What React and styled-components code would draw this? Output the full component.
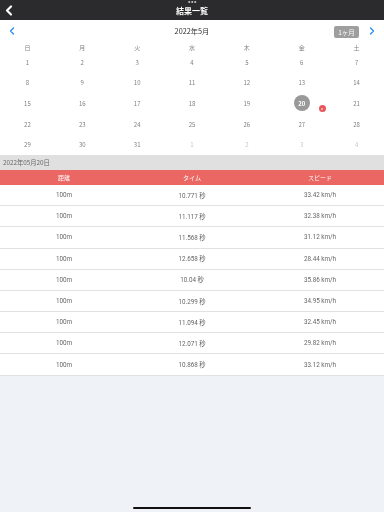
import React from "react";
import styled, { createGlobalStyle } from "styled-components";

const Global = createGlobalStyle`
  html, body { margin: 0; padding: 0; }
  body {
    background: #eff2f7;
    font-family: "Noto Sans CJK JP", "Noto Sans", sans-serif;
    width: 384px;
    height: 512px;
    overflow: hidden;
  }
`;

const Page = styled.div`
  position: relative;
  width: 384px;
  height: 512px;
  display: flex;
  flex-direction: column;
  will-change: transform;
`;

const TopBar = styled.header`
  position: relative;
  height: 20px;
  background: #2b2b2d;
  display: flex;
  align-items: center;
  justify-content: center;
`;

const BackBtn = styled.div`
  position: absolute;
  left: 3px;
  top: 3px;
  width: 12px;
  height: 14px;
  display: flex;
  align-items: center;
  justify-content: center;
`;

const Title = styled.div`
  color: #fff;
  font-size: 8px;
  font-weight: 700;
  line-height: 10px;
  margin-top: 1px;
`;

const Dots = styled.div`
  position: absolute;
  top: 1px;
  left: 50%;
  transform: translateX(-50%);
  display: flex;
  gap: 1.5px;
  span {
    width: 1.5px;
    height: 1.5px;
    border-radius: 50%;
    background: #bbb;
  }
`;

const Calendar = styled.section`
  background: #fff;
  display: flex;
  flex-direction: column;
`;

const MonthRow = styled.div`
  height: 22px;
  display: flex;
  align-items: center;
  justify-content: center;
  position: relative;
`;

const NavArrow = styled.div`
  position: absolute;
  top: 7px;
  ${(p) => (p.$side === "left" ? "left: 9px;" : "right: 9px;")}
  width: 6px;
  height: 8px;
  display: flex;
`;

const MonthLabel = styled.div`
  font-size: 7.3px;
  color: #333;
  line-height: 10px;
`;

const RangeBtn = styled.div`
  position: absolute;
  right: 25px;
  top: 6px;
  width: 25px;
  height: 12px;
  border-radius: 2px;
  background: #9e9e9e;
  color: #fff;
  font-size: 6.5px;
  display: flex;
  align-items: center;
  justify-content: center;
`;

const Grid = styled.div`
  display: grid;
  grid-template-columns: repeat(7, 1fr);
  grid-auto-rows: ${(p) => p.$rowH}px;
`;

const Cell = styled.div`
  position: relative;
  display: flex;
  align-items: center;
  justify-content: center;
  font-size: 6px;
  color: ${(p) => (p.$muted ? "#c8c8c8" : "#808080")};
`;

const Selected = styled.div`
  width: 16px;
  height: 16px;
  border-radius: 50%;
  background: #999;
  color: #fff;
  font-size: 6px;
  font-weight: 700;
  display: flex;
  align-items: center;
  justify-content: center;
`;

const Badge = styled.div`
  position: absolute;
  left: 44.5px;
  top: 12px;
  width: 7px;
  height: 7px;
  border-radius: 50%;
  background: #e9565a;
  display: flex;
  align-items: center;
  justify-content: center;
  &::after {
    content: "";
    width: 2px;
    height: 2px;
    border-radius: 50%;
    background: #f7c3c3;
  }
`;

const DateBand = styled.div`
  height: 15px;
  background: #e0e0e0;
  display: flex;
  align-items: center;
  padding-left: 3px;
  font-size: 6.3px;
  color: #666;
`;

const TableHead = styled.div`
  height: 15px;
  background: #eb6763;
  display: grid;
  grid-template-columns: repeat(3, 1fr);
  align-items: center;
  justify-items: center;
  color: #fff;
  font-size: 6px;
`;

const Row = styled.div`
  height: 20.2px;
  background: #fff;
  border-bottom: 1px solid #e2e2e2;
  display: grid;
  grid-template-columns: repeat(3, 1fr);
  align-items: center;
  justify-items: center;
  color: #666;
  font-size: 6.3px;
  font-family: "Roboto", "Noto Sans CJK JP", sans-serif;
`;

const HomeBar = styled.div`
  position: absolute;
  left: 133px;
  bottom: 3px;
  width: 118px;
  height: 2px;
  border-radius: 1px;
  background: #111;
`;

const weekdays = ["日", "月", "火", "水", "木", "金", "土"];
const days = [];
for (let i = 1; i <= 31; i++) days.push({ d: i });
for (let i = 1; i <= 4; i++) days.push({ d: i, muted: true });

const results = [
  ["100m", "10.771 秒", "33.42 km/h"],
  ["100m", "11.117 秒", "32.38 km/h"],
  ["100m", "11.568 秒", "31.12 km/h"],
  ["100m", "12.658 秒", "28.44 km/h"],
  ["100m", "10.04 秒", "35.86 km/h"],
  ["100m", "10.299 秒", "34.95 km/h"],
  ["100m", "11.094 秒", "32.45 km/h"],
  ["100m", "12.071 秒", "29.82 km/h"],
  ["100m", "10.868 秒", "33.12 km/h"],
];

const Chevron = ({ dir, color, w = 6, h = 8, sw = 1.4 }) => (
  <svg width={w} height={h} viewBox="0 0 6 8">
    <path
      d={dir === "left" ? "M4.5 1 L1.5 4 L4.5 7" : "M1.5 1 L4.5 4 L1.5 7"}
      fill="none"
      stroke={color}
      strokeWidth={sw}
      strokeLinecap="round"
      strokeLinejoin="round"
    />
  </svg>
);

export default function App() {
  return (
    <Page>
      <Global />
      <TopBar>
        <Dots>
          <span />
          <span />
          <span />
        </Dots>
        <BackBtn>
          <Chevron dir="left" color="#fff" w={8} h={11} sw={1.6} />
        </BackBtn>
        <Title>結果一覧</Title>
      </TopBar>
      <Calendar>
        <MonthRow>
          <NavArrow $side="left">
            <Chevron dir="left" color="#2f8ef5" />
          </NavArrow>
          <MonthLabel>2022年5月</MonthLabel>
          <RangeBtn>1ヶ月</RangeBtn>
          <NavArrow $side="right">
            <Chevron dir="right" color="#2f8ef5" />
          </NavArrow>
        </MonthRow>
        <Grid $rowH={10}>
          {weekdays.map((w) => (
            <Cell key={w}>{w}</Cell>
          ))}
        </Grid>
        <Grid $rowH={20.6}>
          {days.map((x, i) => (
            <Cell key={i} $muted={x.muted}>
              {!x.muted && x.d === 20 ? (
                <>
                  <Selected>20</Selected>
                  <Badge />
                </>
              ) : (
                x.d
              )}
            </Cell>
          ))}
        </Grid>
      </Calendar>
      <DateBand>2022年05月20日</DateBand>
      <TableHead>
        <span>距離</span>
        <span>タイム</span>
        <span>スピード</span>
      </TableHead>
      {results.map((r, i) => (
        <Row key={i}>
          <span>{r[0]}</span>
          <span>{r[1]}</span>
          <span>{r[2]}</span>
        </Row>
      ))}
      <HomeBar />
    </Page>
  );
}
